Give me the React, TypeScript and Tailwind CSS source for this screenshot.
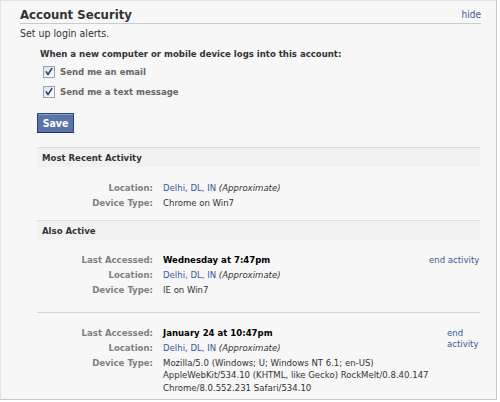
import React from "react";

function Check() {
  return (
    <svg width="12" height="12" viewBox="0 0 12 12" className="shrink-0">
      <defs>
        <linearGradient id="cbg" x1="0" y1="0" x2="1" y2="1">
          <stop offset="0" stopColor="#dfe3ea" />
          <stop offset="1" stopColor="#ffffff" />
        </linearGradient>
      </defs>
      <rect x="0.5" y="0.5" width="11" height="11" fill="url(#cbg)" stroke="#9aa3b3" />
      <path d="M3.2 5.8 L5 8.6 L8.8 2.6" fill="none" stroke="#27406f" strokeWidth="1.6" strokeLinecap="round" strokeLinejoin="round" />
    </svg>
  );
}

function Row({ label, children }: { label: string; children: React.ReactNode }) {
  return (
    <div className="flex items-start">
      <div className="w-[116px] shrink-0 text-right font-bold text-[#808080] py-[1.5px]">{label}</div>
      <div className="ml-[10px] flex-1 py-[1.5px]">{children}</div>
    </div>
  );
}

function Band({ title }: { title: string }) {
  return (
    <div className="h-[20px] border-t border-[#dedede] bg-[#f1f1f1] flex items-center pl-[5px] font-bold text-[#333]">
      {title}
    </div>
  );
}

function Loc() {
  return (
    <span>
      <span className="text-[#3b5998]">Delhi, DL, IN</span> <span className="italic">(Approximate)</span>
    </span>
  );
}

export default function App() {
  return (
    <div className="w-[500px] h-[402px] bg-white font-['DejaVu_Sans_Condensed','DejaVu_Sans',sans-serif] text-[9.5px] leading-[12px] text-[#333]">
      <div className="w-[497px] h-[400px] bg-[#f7f7f7] border-t border-l border-[#e2e2e2] border-r border-r-[#c9c9c9] border-b border-b-[#c9c9c9] pl-[19px] pr-[15px] pt-[6px]">
        <div className="flex items-end justify-between border-b border-[#c6cad3] h-[17px] pb-[1px]">
          <span className="text-[13px] leading-[15px] font-bold text-[#333]">Account Security</span>
          <span className="text-[#3b5998] text-[10px] leading-[12px] pb-[1px]">hide</span>
        </div>
        <div className="mt-[3px] text-[10.5px]">Set up login alerts.</div>

        <div className="ml-[17px] mr-[1px]">
          <div className="mt-[9px] pl-[3px] font-bold">When a new computer or mobile device logs into this account:</div>
          <div className="mt-[2px]">
            <div className="h-[20px] flex items-center pl-[6px] gap-[5px]">
              <Check />
              <span className="font-bold text-[#666]">Send me an email</span>
            </div>
            <div className="h-[20px] flex items-center pl-[6px] gap-[5px]">
              <Check />
              <span className="font-bold text-[#666]">Send me a text message</span>
            </div>
          </div>
          <div className="mt-[11px] h-[20px] w-[37px] flex items-center justify-center bg-[#5b74a8] border border-[#29447e] border-b-[#1a356e] shadow-[inset_0_1px_0_#8a9cc2] text-white font-bold text-[10.5px]">
            Save
          </div>

          <div className="mt-[14px]">
            <Band title="Most Recent Activity" />
          </div>
          <div className="mt-[13px]">
            <Row label="Location:">
              <Loc />
            </Row>
            <Row label="Device Type:">Chrome on Win7</Row>
          </div>

          <div className="mt-[10px]">
            <Band title="Also Active" />
          </div>
          <div className="mt-[12px] flex items-start">
            <div className="flex-1">
              <Row label="Last Accessed:">
                <span className="font-bold text-black">Wednesday at 7:47pm</span>
              </Row>
              <Row label="Location:">
                <Loc />
              </Row>
              <Row label="Device Type:">IE on Win7</Row>
            </div>
            <div className="w-[51px] shrink-0 text-[#3b5998] py-[1.5px]">end activity</div>
          </div>

          <div className="mt-[15px] border-t border-[#d4d4d4]" />
          <div className="mt-[12px] flex items-start">
            <div className="flex-1">
              <Row label="Last Accessed:">
                <span className="font-bold text-black">January 24 at 10:47pm</span>
              </Row>
              <Row label="Location:">
                <Loc />
              </Row>
              <Row label="Device Type:">
                <div className="leading-[12.5px] whitespace-nowrap">
                  Mozilla/5.0 (Windows; U; Windows NT 6.1; en-US)
                  <br />
                  AppleWebKit/534.10 (KHTML, like Gecko) RockMelt/0.8.40.147
                  <br />
                  Chrome/8.0.552.231 Safari/534.10
                </div>
              </Row>
            </div>
            <div className="w-[33px] shrink-0 text-[#3b5998] py-[1.5px] leading-[11.5px]">
              end
              <br />
              activity
            </div>
          </div>
        </div>
      </div>
    </div>
  );
}
